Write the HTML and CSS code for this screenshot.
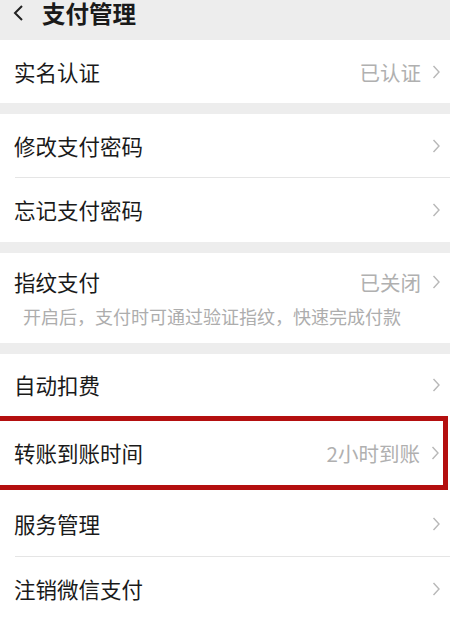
FILE: index.html
```html
<!DOCTYPE html>
<html lang="zh-CN">
<head>
<meta charset="utf-8">
<link rel="stylesheet" href="styles.css">
</head>
<body>
<div class="page">
  <header class="topbar">
    <svg class="back" width="12" height="18" viewBox="0 0 12 18"><polyline points="10,2 3,9 10,16" fill="none" stroke="#222" stroke-width="2"/></svg>
    <h1 class="title">支付管理</h1>
  </header>

  <section class="group g1">
    <div class="row">
      <span class="label">实名认证</span>
      <span class="value">已认证</span>
      <svg class="chev" width="8" height="14" viewBox="0 0 8 14"><polyline points="1.5,1 7,7 1.5,13" fill="none" stroke="#b8b8b8" stroke-width="1.4"/></svg>
    </div>
  </section>

  <section class="group">
    <div class="row divided">
      <span class="label">修改支付密码</span>
      <svg class="chev" width="8" height="14" viewBox="0 0 8 14"><polyline points="1.5,1 7,7 1.5,13" fill="none" stroke="#b8b8b8" stroke-width="1.4"/></svg>
    </div>
    <div class="row">
      <span class="label">忘记支付密码</span>
      <svg class="chev" width="8" height="14" viewBox="0 0 8 14"><polyline points="1.5,1 7,7 1.5,13" fill="none" stroke="#b8b8b8" stroke-width="1.4"/></svg>
    </div>
  </section>

  <section class="group">
    <div class="row tall">
      <div class="line1">
        <span class="label">指纹支付</span>
        <span class="value">已关闭</span>
        <svg class="chev" width="8" height="14" viewBox="0 0 8 14"><polyline points="1.5,1 7,7 1.5,13" fill="none" stroke="#b8b8b8" stroke-width="1.4"/></svg>
      </div>
      <div class="desc">开启后，支付时可通过验证指纹，快速完成付款</div>
    </div>
  </section>

  <section class="group last">
    <div class="row r-auto">
      <span class="label">自动扣费</span>
      <svg class="chev" width="8" height="14" viewBox="0 0 8 14"><polyline points="1.5,1 7,7 1.5,13" fill="none" stroke="#b8b8b8" stroke-width="1.4"/></svg>
    </div>
    <div class="row highlight">
      <span class="label">转账到账时间</span>
      <span class="value">2小时到账</span>
      <svg class="chev" width="8" height="14" viewBox="0 0 8 14"><polyline points="1.5,1 7,7 1.5,13" fill="none" stroke="#b8b8b8" stroke-width="1.4"/></svg>
    </div>
    <div class="row divided r-service">
      <span class="label">服务管理</span>
      <svg class="chev" width="8" height="14" viewBox="0 0 8 14"><polyline points="1.5,1 7,7 1.5,13" fill="none" stroke="#b8b8b8" stroke-width="1.4"/></svg>
    </div>
    <div class="row">
      <span class="label">注销微信支付</span>
      <svg class="chev" width="8" height="14" viewBox="0 0 8 14"><polyline points="1.5,1 7,7 1.5,13" fill="none" stroke="#b8b8b8" stroke-width="1.4"/></svg>
    </div>
  </section>
</div>
</body>
</html>
```

FILE: styles.css
```css
* { box-sizing: border-box; }
html, body { margin: 0; padding: 0; }
body {
  background: #ededed;
  font-family: "Noto Sans CJK SC", "Noto Sans", sans-serif;
  width: 450px;
  height: 621px;
  overflow: hidden;
}
.page { display: flex; flex-direction: column; }

.topbar {
  height: 40px;
  display: flex;
  align-items: flex-start;
  padding-left: 12px;
  background: #ededed;
}
.back { margin-top: 4px; }
.title {
  margin: 0 0 0 18px;
  font-size: 23.5px;
  font-weight: 700;
  line-height: 26px;
  color: #1a1a1a;
}

.group {
  background: #fff;
  margin-bottom: 11px;
}
.group.last { margin-bottom: 0; }

.row {
  height: 64px;
  display: flex;
  align-items: center;
  padding: 0 10px 0 14px;
  position: relative;
}
.g1 .row { height: 63px; }
.row.divided::after {
  content: "";
  position: absolute;
  left: 15px;
  right: 0;
  bottom: 0;
  height: 1px;
  background: #e5e5e5;
}
.label {
  flex: 1;
  font-size: 21.5px;
  color: #1a1a1a;
  line-height: 28px;
}
.value {
  font-size: 20.5px;
  color: #b0b0b0;
  margin-right: 11px;
  line-height: 28px;
}
.chev { flex: none; }

.row.tall {
  height: 90px;
  flex-direction: column;
  align-items: stretch;
  justify-content: flex-start;
  padding-top: 15px;
}
.line1 { display: flex; align-items: center; }
.desc {
  margin-top: 9px;
  padding-left: 9px;
  font-size: 18px;
  line-height: 22px;
  color: #adadad;
  white-space: nowrap;
}

.row.r-auto { height: 62px; }
.row.highlight {
  height: 74px;
  border: 5px solid #b40f0f;
  margin-left: -5px;
  width: 453px;
  padding-left: 14px;
  padding-right: 4px;
}
.row.r-service { height: 67px; }
```
